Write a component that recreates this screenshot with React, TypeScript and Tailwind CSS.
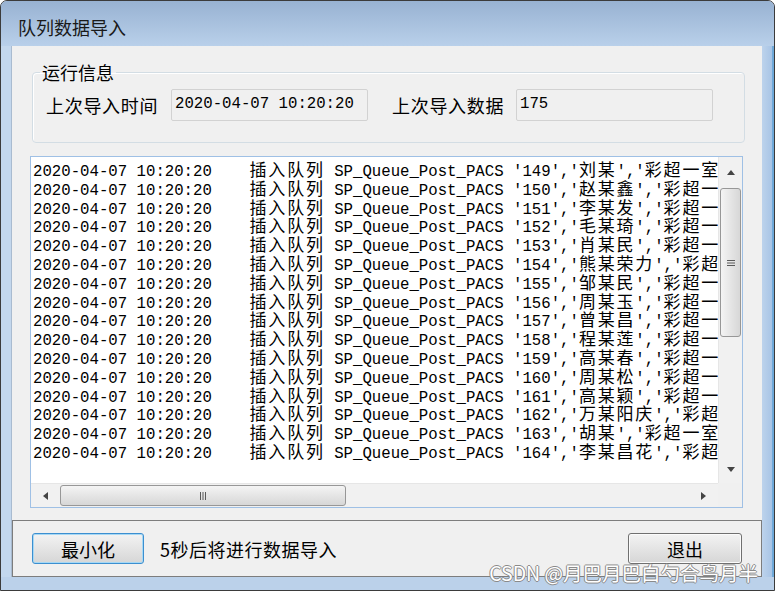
import React from "react";

const rows = [
  ["149", "刘某"],
  ["150", "赵某鑫"],
  ["151", "李某发"],
  ["152", "毛某琦"],
  ["153", "肖某民"],
  ["154", "熊某荣力"],
  ["155", "邹某民"],
  ["156", "周某玉"],
  ["157", "曾某昌"],
  ["158", "程某莲"],
  ["159", "高某春"],
  ["160", "周某松"],
  ["161", "高某颖"],
  ["162", "万某阳庆"],
  ["163", "胡某"],
  ["164", "李某昌花"],
];

// chinese runs get a little extra spacing so they take two mono cells
const renderLine = (s: string) =>
  s.split(/([\u4e00-\u9fff]+)/).map((part, i) =>
    /[\u4e00-\u9fff]/.test(part) ? (
      <span
        key={i}
        className="font-['Noto_Sans_CJK_SC',sans-serif] text-[17px] leading-[18px] tracking-[1.8px]"
      >
        {part}
      </span>
    ) : (
      part
    )
  );

const Arrow = ({ dir }: { dir: "up" | "down" | "left" | "right" }) => {
  const pts = {
    up: "0,5 4,0 8,5",
    down: "0,0 8,0 4,5",
    left: "5,0 5,8 0,4",
    right: "0,0 5,4 0,8",
  }[dir];
  const w = dir === "up" || dir === "down" ? 8 : 5;
  const h = dir === "up" || dir === "down" ? 5 : 8;
  return (
    <svg width={w} height={h} viewBox={`0 0 ${w} ${h}`}>
      <polygon points={pts} fill="#444" />
    </svg>
  );
};

const App = () => {
  return (
    <div className="relative flex h-[591px] w-[775px] flex-col overflow-hidden rounded-t-[7px] border border-[#3b3b3b] bg-[#bcd2ea] font-['Noto_Sans_CJK_SC',sans-serif] text-black">
      <div className="flex h-[45px] shrink-0 items-start bg-gradient-to-b from-[#98b2d2] to-[#b9d0ea] pl-[17px] pt-[14px] text-[18px] leading-[24px] text-[#1a1a1a]">
        队列数据导入
      </div>

      <div className="flex h-[531px] shrink-0">
        <div className="w-[11px] border-r border-[#a9bbd0] bg-[#c3d7ed]" />

        <div className="flex w-[750px] flex-col bg-[#f0f0f0]">
          <fieldset className="ml-[20px] mt-[14px] h-[83px] w-[713px] rounded-[4px] border border-[#d3dde4] px-[13px] shadow-[inset_1px_1px_0_#fff]">
            <legend className="ml-[-6px] px-[2px] text-[18px] leading-[24px]">
              运行信息
            </legend>
            <div className="mt-[5px] flex items-center">
              <div className="w-[125px] text-[18px] leading-[24px] tracking-[0.7px]">
                上次导入时间
              </div>
              <div className="flex h-[32px] w-[197px] items-center rounded-[2px] border border-[#d2d2d2] bg-[#f0f0f0] pl-[3px] font-['Liberation_Mono',monospace] text-[15.7px]">
                2020-04-07 10:20:20
              </div>
              <div className="ml-[24px] w-[124px] text-[18px] leading-[24px] tracking-[0.7px]">
                上次导入数据
              </div>
              <div className="flex h-[32px] w-[197px] items-center rounded-[2px] border border-[#d2d2d2] bg-[#f0f0f0] pl-[3px] font-['Liberation_Mono',monospace] text-[15.7px]">
                175
              </div>
            </div>
          </fieldset>

          <div className="ml-[18px] mt-[13px] grid h-[352px] w-[713px] grid-cols-[1fr_24px] grid-rows-[1fr_24px] border border-[#9fc0e5] bg-white">
            <div className="overflow-hidden whitespace-pre pl-[2px] pt-[3px] font-['Liberation_Mono','Noto_Sans_CJK_SC',monospace] text-[15.7px] leading-[18.8px]">
              {rows.map(([id, name]) => (
                <div key={id} className="h-[18.8px]">
                  {renderLine(
                    `2020-04-07 10:20:20    插入队列 SP_Queue_Post_PACS '${id}','${name}','彩超一室','B超'`
                  )}
                </div>
              ))}
            </div>

            <div className="flex flex-col border-l border-[#e6e6e6] bg-[#f1f1f1]">
              <div className="flex h-[31px] items-center justify-center">
                <Arrow dir="up" />
              </div>
              <div className="mx-[1px] flex h-[149px] items-center justify-center rounded-[3px] border border-[#979797] bg-gradient-to-r from-[#f4f4f4] to-[#d7d7d7]">
                <svg width="8" height="8" viewBox="0 0 8 8">
                  <path d="M0 1.5H8M0 4H8M0 6.5H8" stroke="#5a5a5a" strokeWidth="1" />
                </svg>
              </div>
              <div className="flex-1" />
              <div className="flex h-[28px] items-center justify-center">
                <Arrow dir="down" />
              </div>
            </div>

            <div className="flex border-t border-[#e6e6e6] bg-[#f1f1f1]">
              <div className="flex w-[29px] items-center justify-center">
                <Arrow dir="left" />
              </div>
              <div className="my-[1px] flex w-[286px] items-center justify-center rounded-[3px] border border-[#979797] bg-gradient-to-b from-[#f4f4f4] to-[#d7d7d7]">
                <svg width="8" height="8" viewBox="0 0 8 8">
                  <path d="M1.5 0V8M4 0V8M6.5 0V8" stroke="#5a5a5a" strokeWidth="1" />
                </svg>
              </div>
              <div className="flex-1" />
              <div className="flex w-[29px] items-center justify-center">
                <Arrow dir="right" />
              </div>
            </div>

            <div className="bg-[#f0f0f0]" />
          </div>

          <div className="flex-1" />

          <div className="flex h-[57px] items-center border border-[#7d7d7d] px-[19px]">
            <button className="h-[31px] w-[112px] rounded-[3px] border border-[#3c8fd0] bg-gradient-to-b from-[#f3f3f3] to-[#d6d6d6] text-[18px] leading-[24px] shadow-[inset_0_0_0_1px_#a7d8f4]">
              最小化
            </button>
            <div className="ml-[16px] text-[18px] leading-[24px] tracking-[0.5px]">
              5秒后将进行数据导入
            </div>
            <button className="ml-auto h-[31px] w-[114px] rounded-[3px] border border-[#707070] bg-gradient-to-b from-[#f3f3f3] to-[#d6d6d6] text-[18px] leading-[24px] shadow-[inset_0_0_0_1px_#fbfbfb]">
              退出
            </button>
          </div>
        </div>

        <div className="w-[12px] border-r-[2px] border-[#6fa9d9] bg-gradient-to-r from-[#bdd3ec] to-[#a8c4e5]" />
      </div>

      <div className="h-[13px] shrink-0 bg-[#bbd1ea]" />

      <div className="absolute right-[16px] top-[559px] text-[19.5px] leading-[26px] text-white [text-shadow:1px_0_#8a8a8a,-1px_0_#8a8a8a,0_1px_#8a8a8a,0_-1px_#8a8a8a]">
        CSDN @月巴月巴白勺合鸟月半
      </div>
    </div>
  );
};

export default App;
